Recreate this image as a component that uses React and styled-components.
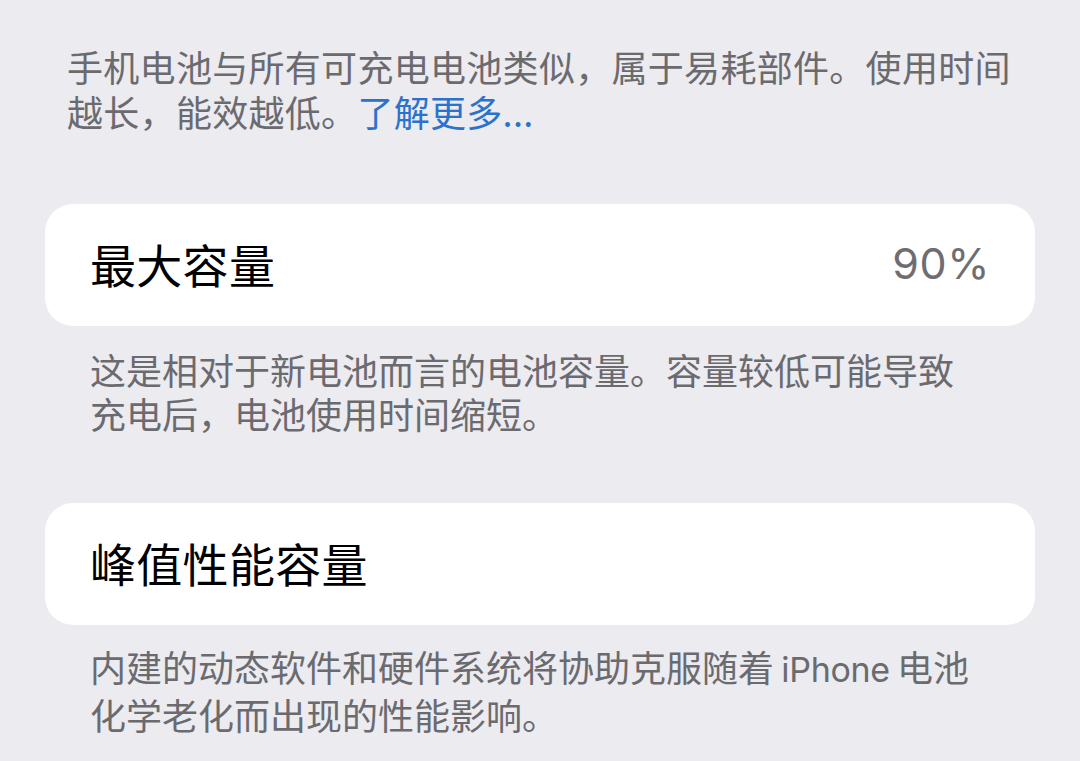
import React from 'react';
import styled, { createGlobalStyle } from 'styled-components';

const GlobalStyle = createGlobalStyle`
  html, body {
    margin: 0;
    padding: 0;
    background: #ebebf0;
  }
  body {
    font-family: "Noto Sans CJK SC", "Noto Sans", sans-serif;
    -webkit-font-smoothing: antialiased;
  }
`;

const Page = styled.div`
  width: 1080px;
  height: 761px;
  overflow: hidden;
  box-sizing: border-box;
  padding: 44px 45px 0;
  background: #ebebf0;
`;

const Intro = styled.p`
  margin: 0 0 70px;
  padding-left: 22px;
  font-size: 36px;
  line-height: 45px;
  letter-spacing: 0.3px;
  color: #6a6a6f;
  white-space: nowrap;
`;

const Link = styled.span`
  color: #2a72cc;
`;

const Card = styled.div`
  display: flex;
  align-items: center;
  justify-content: space-between;
  height: ${(p) => p.$h || 122}px;
  padding: 0 45px;
  background: #fff;
  border-radius: 28px;
`;

const Title = styled.span`
  font-size: 46px;
  color: #000;
  letter-spacing: 0.3px;
  margin-top: -4px;
`;

const Value = styled.span`
  font-family: "Inter", "Noto Sans", sans-serif;
  font-size: 43px;
  color: #6e6e72;
  letter-spacing: 0.6px;
  margin-top: -4px;
`;

const Footer = styled.p`
  margin: ${(p) => p.$top || 21}px 0 ${(p) => p.$bottom || 0}px;
  padding-left: 45px;
  font-size: 36px;
  line-height: 44px;
  color: #6a6a6f;
  white-space: nowrap;
`;

const Latin = styled.span`
  font-family: "Inter", "Noto Sans", sans-serif;
  font-size: 34px;
  letter-spacing: -0.3px;
  word-spacing: -2px;
`;

export default function App() {
  return (
    <Page>
      <GlobalStyle />
      <Intro>
        手机电池与所有可充电电池类似，属于易耗部件。使用时间
        <br />
        越长，能效越低。<Link>了解更多...</Link>
      </Intro>

      <Card>
        <Title>最大容量</Title>
        <Value>90%</Value>
      </Card>
      <Footer $bottom={68}>
        这是相对于新电池而言的电池容量。容量较低可能导致
        <br />
        充电后，电池使用时间缩短。
      </Footer>

      <Card>
        <Title>峰值性能容量</Title>
      </Card>
      <Footer $top={19}>
        内建的动态软件和硬件系统将协助克服随着<Latin> iPhone </Latin>电池
        <br />
        化学老化而出现的性能影响。
      </Footer>
    </Page>
  );
}
